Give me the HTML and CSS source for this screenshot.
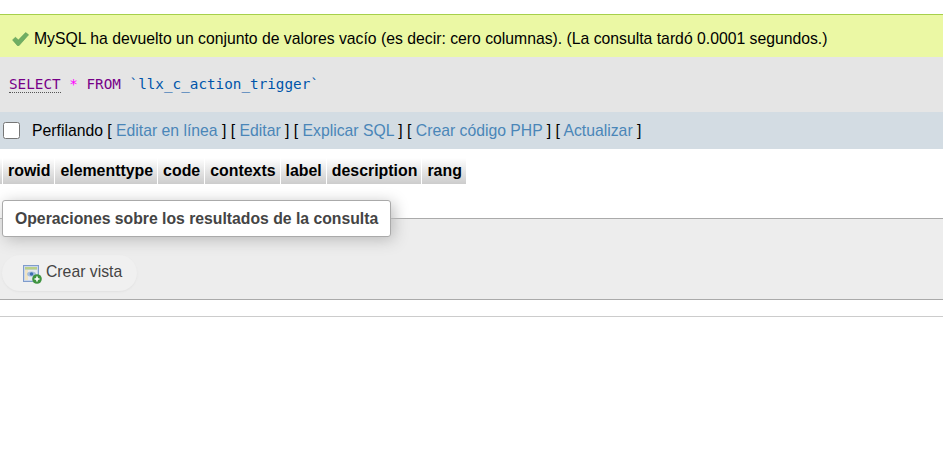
FILE: index.html
```html
<!DOCTYPE html>
<html lang="es">
<head>
<meta charset="utf-8">
<title>phpMyAdmin</title>
<link rel="stylesheet" href="styles.css">
</head>
<body>
<div class="success">
  <svg class="check" width="17" height="14" viewBox="0 0 17 14"><path d="M0.6 8 L3.4 5.2 L6.4 8 L13.6 0.6 L16.6 2.8 L6.8 13.8 L5.6 13.8 Z" fill="#6fae63" stroke="#5d9a55" stroke-width=".6" stroke-linejoin="round"/></svg>
  <span>MySQL ha devuelto un conjunto de valores vacío (es decir: cero columnas). (La consulta tardó 0.0001 segundos.)</span>
</div>
<div class="sql"><code><span class="kw doc">SELECT</span> <span class="op">*</span> <span class="kw">FROM</span> <span class="str">`llx_c_action_trigger`</span></code></div>
<div class="tools">
  <span class="box"></span>
  <span class="tools-text">Perfilando [ <a>Editar en línea</a> ] [ <a>Editar</a> ] [ <a>Explicar SQL</a> ] [ <a>Crear código PHP</a> ] [ <a>Actualizar</a> ]</span>
</div>
<div class="results">
  <div class="th stub"></div>
  <div class="th">rowid</div>
  <div class="th">elementtype</div>
  <div class="th">code</div>
  <div class="th">contexts</div>
  <div class="th">label</div>
  <div class="th">description</div>
  <div class="th">rang</div>
</div>
<div class="ops">
  <div class="legend">Operaciones sobre los resultados de la consulta</div>
  <div class="pill">
    <svg class="view" width="19" height="19" viewBox="0 0 19 19">
      <rect x="0.5" y="0.5" width="15" height="16" fill="#c9d6ea" stroke="#7f9ccc"/>
      <rect x="2" y="2" width="12" height="2.5" fill="#b9cf86"/>
      <rect x="2" y="5" width="12" height="10" fill="#e6e9ee"/>
      <rect x="2" y="5" width="3" height="10" fill="#efe3c2"/>
      <ellipse cx="8.5" cy="9" rx="4.5" ry="2.6" fill="#a8bfdd"/>
      <circle cx="8.5" cy="9" r="1.8" fill="#3f6fb3"/>
      <circle cx="14" cy="14" r="4.8" fill="#3f9440"/>
      <path d="M11.5 14h5M14 11.5v5" stroke="#fff" stroke-width="1.6"/>
    </svg>
    <span>Crear vista</span>
  </div>
</div>
<div class="rule"></div>
</body>
</html>
```
FILE: styles.css
```css
html, body { margin: 0; padding: 0; background: #fff; }
body { font-family: "Liberation Sans", Arial, sans-serif; font-size: 15.76px; color: #000; width: 943px; height: 470px; overflow: hidden; }

.success {
  margin-top: 14px;
  height: 42px;
  border-top: 1px solid #a6d04b;
  background: #ebf8a4;
  display: flex;
  align-items: center;
  padding-left: 12px;
  gap: 5px;
}
.success span { position: relative; top: 3px; }
.check { flex: none; margin-top: 6px; }

.sql {
  height: 53px;
  padding-bottom: 2px;
  background: #e5e5e5;
  display: flex;
  align-items: center;
  padding-left: 9px;
}
code { font-family: "DejaVu Sans Mono", monospace; font-size: 14.3px; white-space: pre; }
.kw { color: #708; }
.doc { border-bottom: 1px dotted #555; }
.op { color: #f0f; }
.str { color: #05a; }

.tools {
  height: 37px;
  background: #d3dce3;
  display: flex;
  align-items: center;
  padding-left: 3px;
}
.box {
  width: 15px;
  height: 15px;
  background: #fff;
  border: 1px solid #767676;
  border-radius: 2.5px;
  margin-right: 12px;
}
.tools-text { white-space: pre; }
a { color: #4a86b8; }

.results {
  display: flex;
  gap: 1px;
  margin-top: 9px;
  height: 26px;
}
.th {
  height: 26px;
  line-height: 25px;
  padding: 0 4px 0 5px;
  font-size: 15.9px;
  font-weight: bold;
  background: linear-gradient(#ffffff, #cccccc);
}
.stub { width: 2px; padding: 0; }

.ops {
  margin-top: 34px;
  border-top: 1px solid #aaa;
  border-bottom: 1px solid #aaa;
  background: #ededed;
  position: relative;
  padding-top: 36px;
  box-sizing: border-box;
  height: 82px;
}
.legend {
  position: absolute;
  left: 2px;
  top: -19px;
  height: 35px;
  line-height: 35px;
  padding: 0 12px;
  background: #fff;
  border: 1px solid #aaa;
  border-radius: 3px;
  font-weight: bold;
  color: #444;
  box-shadow: 3px 3px 15px #bbb;
}
.pill {
  margin-left: 2px;
  width: 135px;
  height: 36px;
  box-sizing: border-box;
  border-radius: 18px;
  background: #f0f0f0;
  box-shadow: 0 1px 2px #e2e2e2;
  display: flex;
  align-items: center;
  padding-left: 21px;
  gap: 4px;
  color: #444;
}
.pill span { position: relative; top: -1px; }
.view { flex: none; margin-top: 2px; }
.rule { margin-top: 16px; border-top: 1px solid #ccc; }
```
